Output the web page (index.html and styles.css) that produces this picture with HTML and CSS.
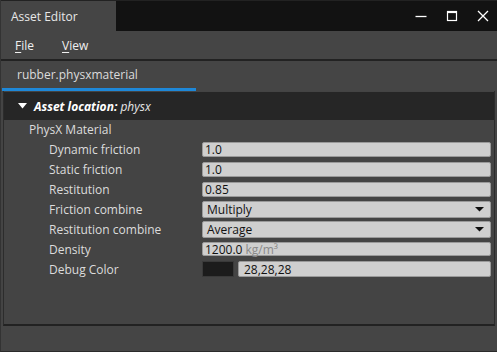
FILE: index.html
```html
<!DOCTYPE html>
<html>
<head>
<meta charset="utf-8">
<link rel="stylesheet" href="styles.css">
</head>
<body>
<div class="window">
  <div class="titlebar">
    <div class="title-tab">Asset Editor</div>
    <div class="controls">
      <svg class="ctl" width="12" height="12" viewBox="0 0 12 12"><path d="M0.5 6.5H11.5" stroke="#fff" stroke-width="1.3"/></svg>
      <svg class="ctl" width="12" height="12" viewBox="0 0 12 12"><rect x="1.5" y="1.5" width="9" height="9" fill="none" stroke="#fff" stroke-width="1.2"/><path d="M1.5 2.3H10.5" stroke="#fff" stroke-width="1.6"/></svg>
      <svg class="ctl" width="12" height="12" viewBox="0 0 12 12"><path d="M1 1L11 11M11 1L1 11" stroke="#fff" stroke-width="1.3"/></svg>
    </div>
  </div>
  <div class="menubar">
    <span class="menu"><u>F</u>ile</span>
    <span class="menu"><u>V</u>iew</span>
  </div>
  <div class="tabbar">
    <div class="doc-tab">rubber.physxmaterial</div>
  </div>
  <div class="content">
    <div class="loc-header">
      <svg class="caret" width="9" height="6" viewBox="0 0 9 6"><path d="M0 0H9L4.5 5.5Z" fill="#fff"/></svg>
      <span class="loc-key">Asset location:</span><span class="loc-val">&nbsp;physx</span>
    </div>
    <div class="grid">
      <div class="group">PhysX Material</div>
      <div class="row"><span class="label">Dynamic friction</span><div class="field text">1.0</div></div>
      <div class="row"><span class="label">Static friction</span><div class="field text">1.0</div></div>
      <div class="row"><span class="label">Restitution</span><div class="field text">0.85</div></div>
      <div class="row"><span class="label">Friction combine</span><div class="field combo"><span>Multiply</span><svg width="9" height="5" viewBox="0 0 9 5"><path d="M0 0H9L4.5 4.5Z" fill="#111"/></svg></div></div>
      <div class="row"><span class="label">Restitution combine</span><div class="field combo"><span>Average</span><svg width="9" height="5" viewBox="0 0 9 5"><path d="M0 0H9L4.5 4.5Z" fill="#111"/></svg></div></div>
      <div class="row"><span class="label">Density</span><div class="field text small">1200.0 <span class="unit">kg/m³</span></div></div>
      <div class="row"><span class="label">Debug Color</span><div class="colorval"><div class="swatch"></div><div class="field colortext">28,28,28</div></div></div>
    </div>
  </div>
  <div class="statusbar"></div>
</div>
</body>
</html>
```
FILE: styles.css
```css
html, body {
  margin: 0;
  padding: 0;
  background: #444444;
}
body {
  width: 497px;
  height: 352px;
  overflow: hidden;
  font-family: "Open Sans", "Noto Sans", sans-serif;
  font-size: 12px;
  color: #e0e0e0;
}
.window {
  width: 497px;
  height: 352px;
  display: flex;
  flex-direction: column;
  box-sizing: border-box;
  border-left: 1px solid #333;
  border-bottom: 1px solid #2a2a2a;
}
.titlebar {
  height: 31px;
  box-sizing: border-box;
  border-top: 1px solid #222;
  background: #121212;
  display: flex;
  align-items: stretch;
  flex-shrink: 0;
}
.title-tab {
  width: 115px;
  background: #454545;
  padding-left: 10px;
  box-sizing: border-box;
  display: flex;
  align-items: center;
  font-size: 12px;
  color: #e8e8e8;
}
.controls {
  margin-left: auto;
  display: flex;
  align-items: center;
  gap: 19px;
  padding-right: 8px;
}
.ctl { display: block; }
.menubar {
  height: 28px;
  flex-shrink: 0;
  background: #454545;
  border-bottom: 2px solid #222;
  display: flex;
  align-items: center;
  padding-left: 14px;
  gap: 28px;
  font-size: 12px;
  color: #f0f0f0;
}
.menu u { text-decoration-thickness: 1px; text-underline-offset: 2px; }
.tabbar {
  height: 30px;
  flex-shrink: 0;
  background: #454545;
  display: flex;
  align-items: stretch;
  padding-left: 1px;
}
.doc-tab {
  width: 194px;
  box-sizing: border-box;
  border-bottom: 3px solid #1e88d8;
  padding-left: 15px;
  display: flex;
  align-items: center;
  font-size: 12px;
  color: #dcdcdc;
}
.content {
  flex: 1;
  margin: 0 2px 0 2px;
  border-left: 1px solid #2c2c2c;
  border-right: 1px solid #2c2c2c;
  border-bottom: 2px solid #222;
  display: flex;
  flex-direction: column;
}
.loc-header {
  height: 28px;
  margin-top: 1px;
  background: #262626;
  display: flex;
  align-items: center;
  padding-left: 14px;
  font-size: 12px;
  color: #ffffff;
  font-style: italic;
}
.caret { margin-right: 7px; }
.loc-key { font-weight: 700; }
.loc-val { font-weight: 400; color: #e8e8e8; }
.grid {
  display: flex;
  flex-direction: column;
}
.group {
  height: 19px;
  display: flex;
  align-items: center;
  padding-left: 25px;
  color: #dcdcdc;
}
.row {
  height: 20px;
  display: flex;
  align-items: center;
}
.label {
  width: 153px;
  padding-left: 45px;
  flex-shrink: 0;
  color: #dcdcdc;
}
.field {
  box-sizing: border-box;
  width: 289px;
  background: #cfcfcf;
  border: 1px solid #9a9a9a;
  border-radius: 2px;
  color: #111;
  display: flex;
  align-items: center;
  padding-left: 2px;
}
.text { height: 15px; }
.small { height: 14px; }
.combo {
  height: 17px;
  padding-left: 4px;
  padding-right: 6px;
  justify-content: space-between;
}
.unit { color: #8a8a8a; margin-left: 3px; }
.colorval {
  display: flex;
  gap: 4px;
  width: 289px;
}
.swatch {
  width: 32px;
  height: 16px;
  box-sizing: border-box;
  background: #1c1c1c;
  border: 1px solid #3a3a3a;
}
.colortext {
  flex: 1;
  width: auto;
  height: 16px;
  padding-left: 5px;
}
.statusbar {
  height: 25px;
  flex-shrink: 0;
  background: #454545;
}
```
